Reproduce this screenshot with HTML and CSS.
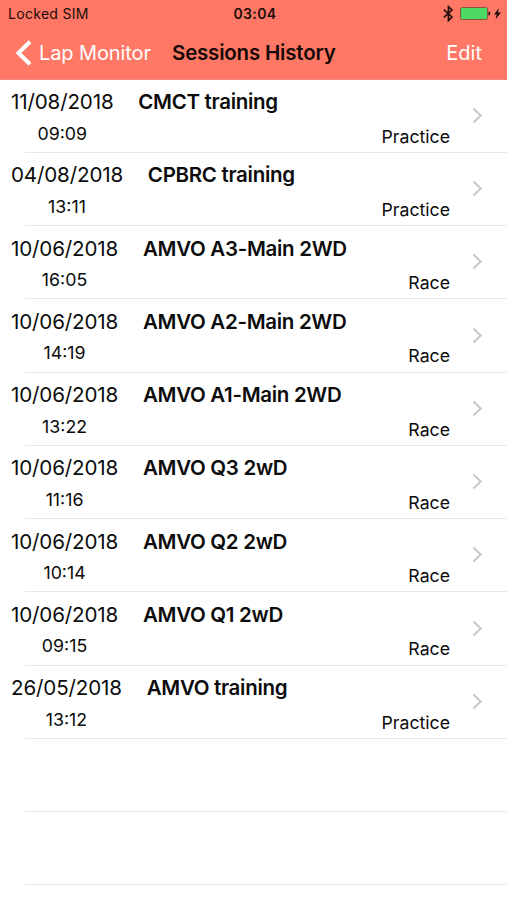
FILE: index.html
```html
<!DOCTYPE html>
<html lang="en">
<head>
<meta charset="utf-8">
<title>Sessions History</title>
<link rel="stylesheet" href="styles.css">
</head>
<body>
<header class="header">
  <div class="status">
    <span class="carrier">Locked SIM</span>
    <span class="clock">03:04</span>
    <svg class="indicators" width="60" height="18" viewBox="0 0 60 18">
      <path d="M1.8 4.6 L10 12 L6.4 15.6 V1.6 L10 5 L1.8 12.4" fill="none" stroke="#1c0d0a" stroke-width="1.6"/>
      <rect x="18.5" y="2.5" width="27" height="12" rx="2" fill="#4cd964" stroke="#86553a" stroke-width="1"/>
      <path d="M47 6.8 Q49 8.5 47 10.2 Z" fill="#1c0d0a" stroke="#1c0d0a"/>
      <path d="M56.8 3.2 L52 9.4 H54.7 L53.6 14.2 L59 7.5 H56 Z" fill="#1c0d0a"/>
    </svg>
  </div>
  <nav class="nav">
    <a class="back"><svg width="17" height="26" viewBox="0 0 17 26"><path d="M15 1.7 L3.5 13 L15 24.3" fill="none" stroke="#fff" stroke-width="4"/></svg><span class="back-label">Lap Monitor</span></a>
    <h1 class="title">Sessions History</h1>
    <a class="edit">Edit</a>
  </nav>
</header>
<main class="list" id="list"></main>
<script src="sessions.js"></script>
</body>
</html>
```
FILE: styles.css
```css
* { box-sizing: border-box; }
body {
  margin: 0;
  height: 900px;
  overflow: hidden;
  background: #fff;
  color: #0c0c0c;
  font-family: Inter, "Liberation Sans", sans-serif;
}
.header {
  height: 79.5px;
  background: #ff7765;
  border-bottom: 1px solid #f2867a;
}
.status {
  display: grid;
  grid-template-columns: 1fr auto 1fr;
  align-items: center;
  height: 27px;
  padding: 0 5px 0 8px;
  color: #1c0d0a;
}
.carrier { font-size: 14px; letter-spacing: 0.3px; }
.clock { font-size: 14px; font-weight: 600; letter-spacing: 0.4px; }
.indicators { justify-self: end; }
.nav {
  display: grid;
  grid-template-columns: 1fr auto 1fr;
  align-items: center;
  height: 51px;
  padding: 0 25px 0 15px;
}
.back {
  display: flex;
  align-items: center;
  gap: 7px;
  width: 147px;
  color: #fff;
  font-size: 20px;
  letter-spacing: -0.1px;
  white-space: nowrap;
}
.title {
  margin: 0 0 0 10px;
  font-size: 20.5px;
  font-weight: 600;
  letter-spacing: -0.2px;
  color: #170907;
  white-space: nowrap;
}
.edit { justify-self: end; font-size: 20px; color: #fff; }
.row {
  display: flex;
  height: 73.25px;
  margin-left: 25px;
  border-bottom: 1px solid #e8e8e8;
}
.when {
  display: flex;
  flex-direction: column;
  align-items: center;
  margin-left: -14px;
}
.date { font-size: 20.6px; letter-spacing: -0.15px; line-height: 24px; margin-top: 10.5px; }
.time { font-size: 17.8px; line-height: 22px; margin-top: 8.5px; }
.name {
  margin: 10.5px 0 0 24.8px;
  font-size: 20.5px;
  letter-spacing: -0.3px;
  line-height: 24px;
  font-weight: 600;
  white-space: nowrap;
}
.kind { margin: 46px 22px 0 auto; font-size: 17.7px; line-height: 22px; }
.chevron { margin: 27.4px 24px 0 0; flex: none; }
```
FILE: sessions.js
```js
const sessions = [
  ["11/08/2018", "09:09", "CMCT training", "Practice"],
  ["04/08/2018", "13:11", "CPBRC training", "Practice"],
  ["10/06/2018", "16:05", "AMVO A3-Main 2WD", "Race"],
  ["10/06/2018", "14:19", "AMVO A2-Main 2WD", "Race"],
  ["10/06/2018", "13:22", "AMVO A1-Main 2WD", "Race"],
  ["10/06/2018", "11:16", "AMVO Q3 2wD", "Race"],
  ["10/06/2018", "10:14", "AMVO Q2 2wD", "Race"],
  ["10/06/2018", "09:15", "AMVO Q1 2wD", "Race"],
  ["26/05/2018", "13:12", "AMVO training", "Practice"]
];
const chevron = '<svg class="chevron" width="11" height="17" viewBox="0 0 11 17"><path d="M1.5 1.5 L8.7 8.5 L1.5 15.5" fill="none" stroke="#c7c7cc" stroke-width="2"/></svg>';
const rows = sessions.map(([date, time, name, kind]) =>
  `<div class="row"><div class="when"><span class="date">${date}</span><span class="time">${time}</span></div><span class="name">${name}</span><span class="kind">${kind}</span>${chevron}</div>`);
const blank = '<div class="row"></div>';
document.getElementById("list").innerHTML = rows.join("") + blank.repeat(2);
```
